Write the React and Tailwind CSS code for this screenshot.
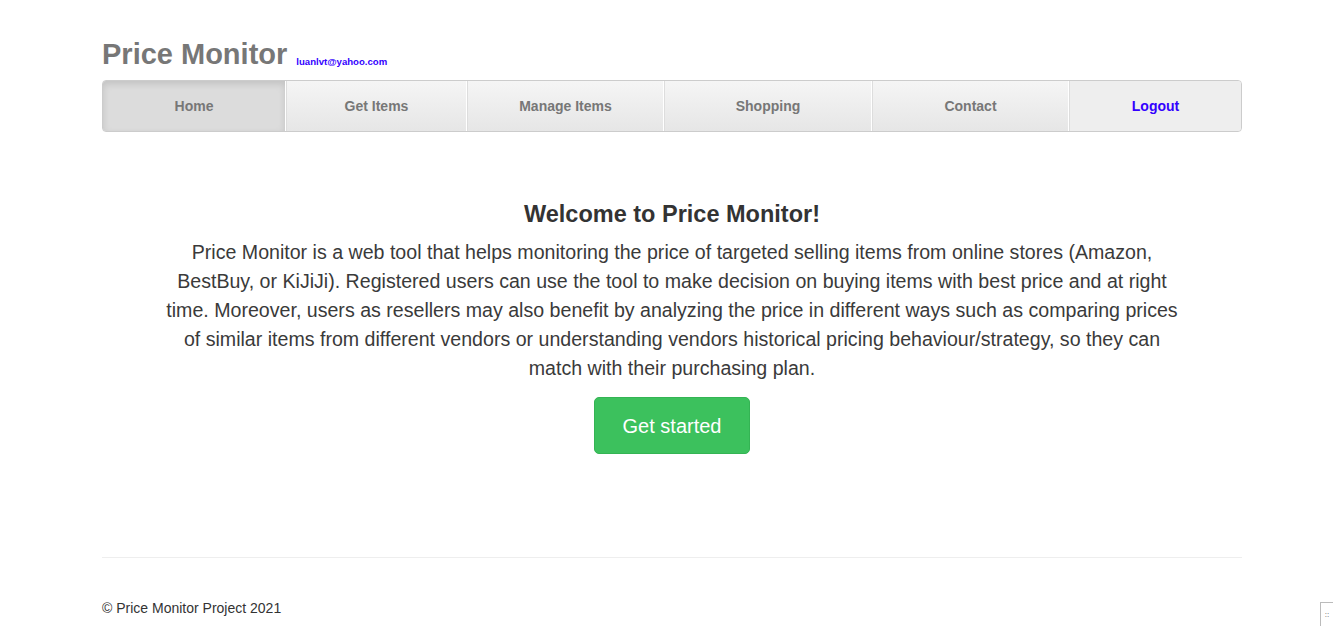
import React from "react";

const navItems = [
  { label: "Home", width: "w-[183px]", active: true },
  { label: "Get Items", width: "w-[181px]" },
  { label: "Manage Items", width: "w-[197px]" },
  { label: "Shopping", width: "w-[208px]" },
  { label: "Contact", width: "w-[197px]" },
  { label: "Logout", width: "flex-1", logout: true },
];

function App() {
  return (
    <div className="relative min-h-[626px] bg-white font-['Liberation_Sans',Helvetica,Arial,sans-serif] text-[#333]">
      <div className="ml-[102px] w-[1140px] pt-[36px]">
        {/* header */}
        <div className="flex items-end h-[36px]">
          <h1 className="text-[29px] leading-[36px] font-bold text-[#777]">Price Monitor</h1>
          <span className="ml-[9px] mb-[4px] text-[9.6px] leading-[12px] font-bold text-[#3300ff]">
            luanlvt@yahoo.com
          </span>
        </div>

        {/* nav */}
        <nav className="mt-[8px] flex h-[52px] rounded-[4px] border border-[#ccc] overflow-hidden bg-gradient-to-b from-[#f5f5f5] to-[#e6e6e6]">
          {navItems.map((item, i) => (
            <a
              key={item.label}
              className={`${item.width} flex items-center justify-center text-[14px] font-bold ${
                i > 0 ? "border-l border-l-[#ddd]" : ""
              } ${i < navItems.length - 1 ? "border-r border-r-white" : ""} ${
                item.active
                  ? "bg-[#dcdcdc] shadow-[inset_0_3px_7px_rgba(0,0,0,0.12)]"
                  : ""
              } ${item.logout ? "bg-[#eeeeee] text-[#3300ff]" : "text-[#777]"}`}
            >
              {item.label}
            </a>
          ))}
        </nav>

        {/* main */}
        <div className="mt-[68px] flex flex-col items-center text-center">
          <h2 className="text-[23.5px] leading-[28px] font-bold text-[#333]">Welcome to Price Monitor!</h2>
          <p className="mt-[10px] text-[19.6px] leading-[29px] font-light text-[#3a3a3a]">
            Price Monitor is a web tool that helps monitoring the price of targeted selling items from online stores (Amazon,
            <br />
            BestBuy, or KiJiJi). Registered users can use the tool to make decision on buying items with best price and at right
            <br />
            time. Moreover, users as resellers may also benefit by analyzing the price in different ways such as comparing prices
            <br />
            of similar items from different vendors or understanding vendors historical pricing behaviour/strategy, so they can
            <br />
            match with their purchasing plan.
          </p>
          <button className="mt-[14px] w-[156px] h-[57px] rounded-[5px] border border-[#34b454] bg-[#3cc15d] text-white text-[20px]">
            Get started
          </button>
        </div>

        {/* footer */}
        <hr className="mt-[103px] border-t border-[#eee]" />
        <footer className="mt-[40px] text-[14px] leading-[20px] text-[#333]">© Price Monitor Project 2021</footer>
      </div>

      <div className="absolute right-0 top-[602px] w-[13px] h-[24px] border-l border-t border-[#bbb] bg-white flex items-center justify-center text-[8px] leading-none text-[#555]">
        ::
      </div>
    </div>
  );
}

export default App;
